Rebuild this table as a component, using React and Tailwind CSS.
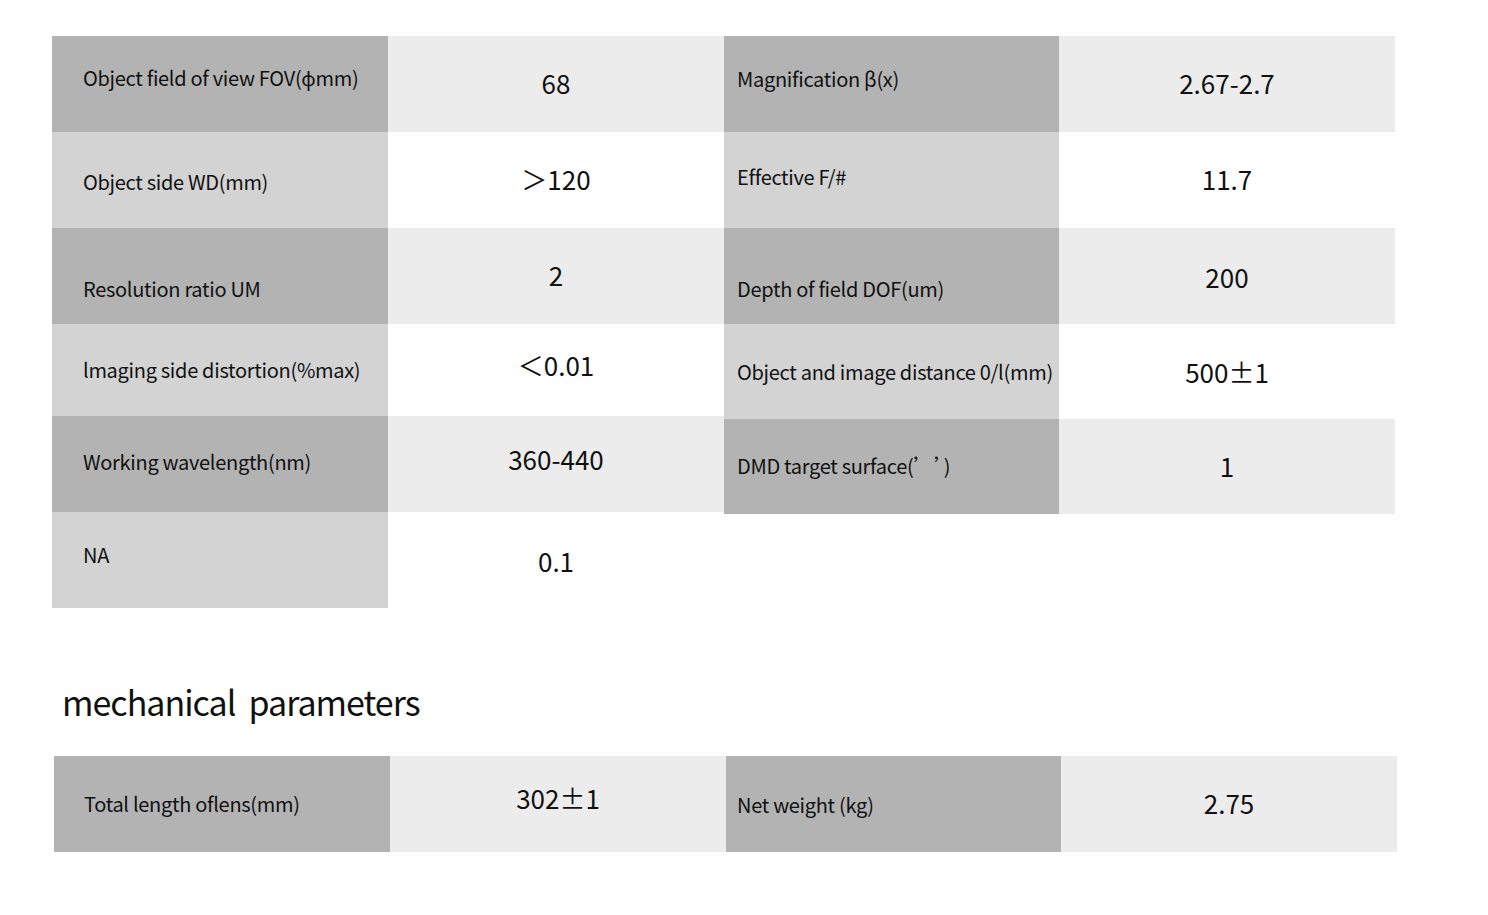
import React from 'react';

const font = { fontFamily: '"Noto Sans CJK SC", "Noto Sans", sans-serif' };

const dmdLabel = (
  <>
    DMD target surface(’<span className="inline-block w-[1px]" />’)
  </>
);

const leftRows = [
  { h: 'h-[96px]', label: 'Object field of view FOV(ϕmm)', value: '68', lBg: 'bg-[#b3b3b3]', vBg: 'bg-[#ececec]', lPos: 'pb-[12px]', vPos: 'pb-[4px]' },
  { h: 'h-[96px]', label: 'Object side WD(mm)', value: '＞120', lBg: 'bg-[#d3d3d3]', vBg: 'bg-white', lPos: 'pt-[4px]', vPos: 'pb-[3px]' },
  { h: 'h-[96px]', label: 'Resolution ratio UM', value: '2', lBg: 'bg-[#b3b3b3]', vBg: 'bg-[#ececec]', lPos: 'pt-[26px]', vPos: 'pb-[3px]' },
  { h: 'h-[92px]', label: 'lmaging side distortion(%max)', value: '＜0.01', lBg: 'bg-[#d3d3d3]', vBg: 'bg-white', lPos: '', vPos: 'pb-[12px]' },
  { h: 'h-[96px]', label: 'Working wavelength(nm)', value: '360-440', lBg: 'bg-[#b3b3b3]', vBg: 'bg-[#ececec]', lPos: 'pb-[4px]', vPos: 'pb-[12px]' },
  { h: 'h-[96px]', label: 'NA', value: '0.1', lBg: 'bg-[#d3d3d3]', vBg: 'bg-white', lPos: 'pb-[10px]', vPos: '' },
];

const rightRows = [
  { h: 'h-[96px]', label: 'Magnification β(x)', value: '2.67-2.7', lBg: 'bg-[#b3b3b3]', vBg: 'bg-[#ececec]', lPos: 'pb-[10px]', vPos: 'pb-[4px]' },
  { h: 'h-[96px]', label: 'Effective F/#', value: '11.7', lBg: 'bg-[#d3d3d3]', vBg: 'bg-white', lPos: 'pb-[6px]', vPos: 'pb-[4px]' },
  { h: 'h-[96px]', label: 'Depth of field DOF(um)', value: '200', lBg: 'bg-[#b3b3b3]', vBg: 'bg-[#ececec]', lPos: 'pt-[26px]', vPos: '' },
  { h: 'h-[95px]', label: 'Object and image distance 0/l(mm)', value: '500±1', lBg: 'bg-[#d3d3d3]', vBg: 'bg-white', lPos: '', vPos: 'pb-[1px]' },
  { h: 'h-[95px]', label: dmdLabel, value: '1', lBg: 'bg-[#b3b3b3]', vBg: 'bg-[#ececec]', lPos: 'pb-[2px]', vPos: 'pb-[2px]' },
];

function Row({ row, pad, labelW, valueW }) {
  return (
    <div className={`flex ${row.h}`}>
      <div className={`${labelW} ${row.lBg} ${pad} ${row.lPos} flex items-center whitespace-pre text-[20px] tracking-[-0.3px] text-[#111]`}>
        <span>{row.label}</span>
      </div>
      <div className={`${valueW} ${row.vBg} ${row.vPos} flex items-center justify-center text-[26px] text-[#111]`}>
        {row.value}
      </div>
    </div>
  );
}

export default function App() {
  return (
    <div className="w-[1488px] h-[915px] bg-white" style={font}>
      <div className="flex items-start pt-[36px] pl-[52px]">
        <div className="flex flex-col">
          {leftRows.map((r, i) => (
            <Row key={i} row={r} pad="pl-[31px]" labelW="w-[336px]" valueW="w-[336px]" />
          ))}
        </div>
        <div className="flex flex-col">
          {rightRows.map((r, i) => (
            <Row key={i} row={r} pad="pl-[13px]" labelW="w-[335px]" valueW="w-[336px]" />
          ))}
        </div>
      </div>

      <h2 className="pl-[62px] pt-[70px] text-[34px] leading-[48px] tracking-[-1px] text-[#111] whitespace-pre">
        mechanical  parameters
      </h2>

      <div className="flex pl-[54px] pt-[30px]">
        <Row
          row={{ h: 'h-[96px]', label: 'Total length oflens(mm)', value: '302±1', lBg: 'bg-[#b3b3b3]', vBg: 'bg-[#ececec]', lPos: '', vPos: 'pb-[13px]' }}
          pad="pl-[30px]" labelW="w-[336px]" valueW="w-[336px]"
        />
        <Row
          row={{ h: 'h-[96px]', label: 'Net weight (kg)', value: '2.75', lBg: 'bg-[#b3b3b3]', vBg: 'bg-[#ececec]', lPos: 'pt-[2px]', vPos: 'pb-[3px]' }}
          pad="pl-[11px]" labelW="w-[335px]" valueW="w-[336px]"
        />
      </div>
    </div>
  );
}
